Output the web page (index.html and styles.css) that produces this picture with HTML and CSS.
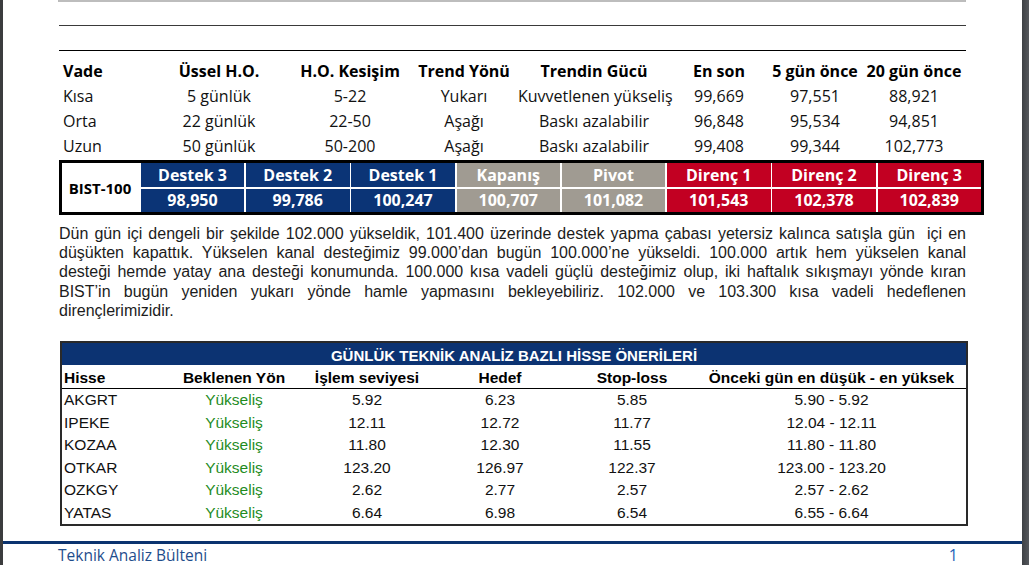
FILE: index.html
```html
<!DOCTYPE html>
<html lang="tr">
<head>
<meta charset="utf-8">
<title>Teknik Analiz Bülteni</title>
<link rel="stylesheet" href="styles.css">
</head>
<body>
<div class="viewer">
  <div class="gutter-left"></div>
  <div class="page">
    <div class="content">
      <div class="topbox"></div>
      <div class="rule rule-1"></div>
      <div class="rule rule-2"></div>

      <table class="trend">
        <colgroup>
          <col style="width:89px"><col style="width:142px"><col style="width:120px"><col style="width:108px">
          <col style="width:152px"><col style="width:98px"><col style="width:94px"><col style="width:104px">
        </colgroup>
        <thead>
          <tr>
            <th class="first">Vade</th><th>Üssel H.O.</th><th>H.O. Kesişim</th><th>Trend Yönü</th>
            <th>Trendin Gücü</th><th>En son</th><th>5 gün önce</th><th>20 gün önce</th>
          </tr>
        </thead>
        <tbody>
          <tr>
            <td class="first">Kısa</td><td>5 günlük</td><td>5-22</td><td>Yukarı</td>
            <td>Kuvvetlenen yükseliş</td><td>99,669</td><td>97,551</td><td>88,921</td>
          </tr>
          <tr>
            <td class="first">Orta</td><td>22 günlük</td><td>22-50</td><td>Aşağı</td>
            <td>Baskı azalabilir</td><td>96,848</td><td>95,534</td><td>94,851</td>
          </tr>
          <tr>
            <td class="first">Uzun</td><td>50 günlük</td><td>50-200</td><td>Aşağı</td>
            <td>Baskı azalabilir</td><td>99,408</td><td>99,344</td><td>102,773</td>
          </tr>
        </tbody>
      </table>

      <div class="levels">
        <div class="bist">BIST-100</div>
        <div class="lv head support">Destek 3</div>
        <div class="lv head support">Destek 2</div>
        <div class="lv head support">Destek 1</div>
        <div class="lv head neutral">Kapanış</div>
        <div class="lv head neutral">Pivot</div>
        <div class="lv head resist">Direnç 1</div>
        <div class="lv head resist">Direnç 2</div>
        <div class="lv head resist">Direnç 3</div>
        <div class="lv val support">98,950</div>
        <div class="lv val support">99,786</div>
        <div class="lv val support">100,247</div>
        <div class="lv val neutral">100,707</div>
        <div class="lv val neutral">101,082</div>
        <div class="lv val resist">101,543</div>
        <div class="lv val resist">102,378</div>
        <div class="lv val resist">102,839</div>
      </div>

      <div class="commentary">
        <span class="ln">Dün gün içi dengeli bir şekilde 102.000 yükseldik, 101.400 üzerinde destek yapma çabası yetersiz kalınca satışla gün&nbsp; içi en</span>
        <span class="ln">düşükten kapattık. Yükselen kanal desteğimiz 99.000’dan bugün 100.000’ne yükseldi. 100.000 artık hem yükselen kanal</span>
        <span class="ln">desteği hemde yatay ana desteği konumunda. 100.000 kısa vadeli güçlü desteğimiz olup, iki haftalık sıkışmayı yönde kıran</span>
        <span class="ln">BIST’in bugün yeniden yukarı yönde hamle yapmasını bekleyebiliriz. 102.000 ve 103.300 kısa vadeli hedeflenen</span>
        <span class="ln last">dirençlerimizidir.</span>
      </div>

      <table class="picks">
        <colgroup>
          <col style="width:105px"><col style="width:134px"><col style="width:132px">
          <col style="width:134px"><col style="width:130px"><col style="width:269px">
        </colgroup>
        <thead>
          <tr><th class="title" colspan="6">GÜNLÜK TEKNİK ANALİZ BAZLI HİSSE ÖNERİLERİ</th></tr>
          <tr class="heads">
            <th class="sym">Hisse</th><th>Beklenen Yön</th><th>İşlem seviyesi</th>
            <th>Hedef</th><th>Stop-loss</th><th>Önceki gün en düşük - en yüksek</th>
          </tr>
        </thead>
        <tbody>
          <tr><td class="sym">AKGRT</td><td class="up">Yükseliş</td><td>5.92</td><td>6.23</td><td>5.85</td><td>5.90 - 5.92</td></tr>
          <tr><td class="sym">IPEKE</td><td class="up">Yükseliş</td><td>12.11</td><td>12.72</td><td>11.77</td><td>12.04 - 12.11</td></tr>
          <tr><td class="sym">KOZAA</td><td class="up">Yükseliş</td><td>11.80</td><td>12.30</td><td>11.55</td><td>11.80 - 11.80</td></tr>
          <tr><td class="sym">OTKAR</td><td class="up">Yükseliş</td><td>123.20</td><td>126.97</td><td>122.37</td><td>123.00 - 123.20</td></tr>
          <tr><td class="sym">OZKGY</td><td class="up">Yükseliş</td><td>2.62</td><td>2.77</td><td>2.57</td><td>2.57 - 2.62</td></tr>
          <tr><td class="sym">YATAS</td><td class="up">Yükseliş</td><td>6.64</td><td>6.98</td><td>6.54</td><td>6.55 - 6.64</td></tr>
        </tbody>
      </table>
    </div>

    <div class="footer-rule"></div>
    <div class="footer">
      <span class="footer-title">Teknik Analiz Bülteni</span>
      <span class="footer-page">1</span>
    </div>
  </div>
  <div class="gutter-right"></div>
</div>
</body>
</html>
```

FILE: styles.css
```css
html, body {
  margin: 0;
  padding: 0;
  background: #ffffff;
}

body {
  width: 1029px;
  height: 565px;
  overflow: hidden;
}

.viewer {
  display: flex;
  height: 565px;
}

.gutter-left {
  flex: none;
  width: 3px;
  background: #3b3c3e;
}

.gutter-right {
  flex: none;
  width: 7px;
  background: linear-gradient(90deg, #3e4145, #55585c);
}

.page {
  flex: 1;
  min-width: 0;
  background: #ffffff;
  display: flex;
  flex-direction: column;
}

.content {
  padding: 0 56px;
}

.topbox {
  height: 0;
  margin-left: -1px;
  border-left: 1px solid #b8b8b8;
  border-right: 1px solid #b8b8b8;
  border-bottom: 2px solid #bdbdbd;
}

.rule {
  height: 1px;
}

.rule-1 {
  margin-top: 23px;
  background: #3a3a3a;
}

.rule-2 {
  margin-top: 24px;
  background: #000000;
}

/* Trend table */
.trend {
  margin-top: 8px;
  width: 907px;
  table-layout: fixed;
  border-collapse: collapse;
  font-family: "Open Sans", "Noto Sans", sans-serif;
  font-size: 16px;
  color: #111111;
}

.trend th,
.trend td {
  padding: 0;
  height: 25px;
  line-height: 25px;
  text-align: center;
  white-space: nowrap;
}

.trend th {
  font-weight: 700;
  color: #000000;
}

.trend .first {
  text-align: left;
  padding-left: 4px;
}

/* Pivot levels */
.levels {
  margin-top: 1px;
  width: max-content;
  display: grid;
  grid-template-columns: 77px repeat(8, 103.5px);
  grid-template-rows: 24px 23px;
  column-gap: 1.75px;
  row-gap: 2px;
  border: 3px solid #000000;
  background: #ffffff;
  font-family: "Open Sans", "Noto Sans", sans-serif;
  font-weight: 700;
  font-size: 16px;
  color: #ffffff;
}

.bist {
  grid-row: 1 / 3;
  display: flex;
  align-items: center;
  justify-content: center;
  color: #000000;
  font-size: 15px;
  padding-right: 1px;
}

.lv {
  text-align: center;
  white-space: nowrap;
}

.lv.head {
  line-height: 24px;
}

.lv.val {
  line-height: 23px;
}

.support {
  background: #0b3476;
}

.neutral {
  background: #a09b92;
}

.resist {
  background: #c20022;
}

/* Commentary */
.commentary {
  margin-top: 9px;
  width: 907px;
  font-family: "Liberation Sans", Arial, sans-serif;
  font-size: 16px;
  line-height: 19.2px;
  color: #1c1c1c;
}

.commentary .ln {
  display: block;
  text-align: justify;
  text-align-last: justify;
}

.commentary .ln.last {
  text-align-last: left;
}

/* Stock picks */
.picks {
  margin-top: 21px;
  margin-left: 1px;
  width: 908px;
  table-layout: fixed;
  border-collapse: separate;
  border-spacing: 0;
  border: 2px solid #2a2a2a;
  font-family: "Liberation Sans", Arial, sans-serif;
  font-size: 15.5px;
  color: #111111;
}

.picks th,
.picks td {
  padding: 0;
  text-align: center;
  white-space: nowrap;
}

.picks .title {
  background: #0c3372;
  color: #ffffff;
  font-size: 15px;
  font-weight: 700;
  height: 19px;
  line-height: 19px;
  padding-top: 3px;
}

.picks .heads th {
  font-weight: 700;
  color: #000000;
  line-height: 21px;
  height: 21px;
  padding-top: 2px;
  border-bottom: 1px solid #000000;
}

.picks td {
  height: 22.5px;
  line-height: 22.5px;
}

.picks .sym {
  text-align: left;
  padding-left: 2px;
}

.picks .up {
  color: #1f8c1f;
}

/* Footer */
.footer-rule {
  margin-top: 15px;
  height: 4px;
  background: #0b336f;
}

.footer {
  margin-top: 1px;
  display: flex;
  justify-content: space-between;
  padding: 0 64px 0 55px;
  font-family: "Open Sans", "Noto Sans", sans-serif;
  font-size: 15.5px;
  line-height: 20px;
}

.footer-title {
  color: #1f4d8c;
}

.footer-page {
  color: #2563b8;
  font-size: 16px;
}
```
